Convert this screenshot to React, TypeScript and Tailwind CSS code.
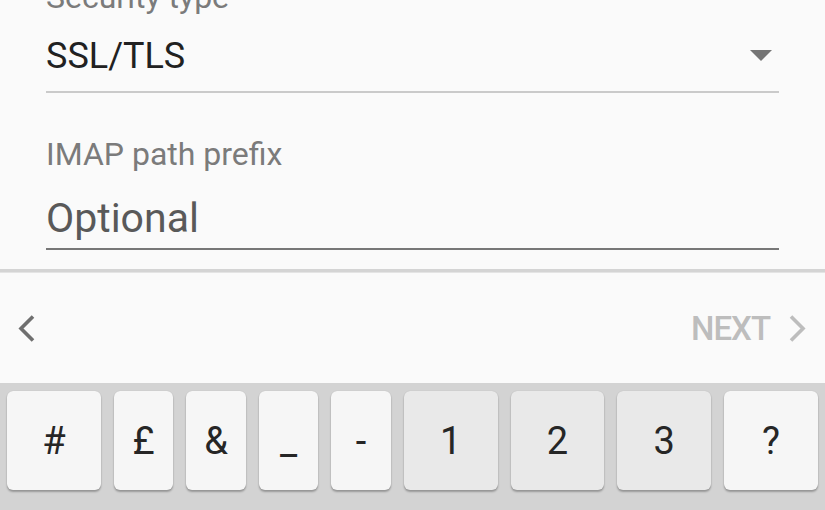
import React from "react";

const Key = ({ label, wide, dark, className = "" }: { label: string; wide?: boolean; dark?: boolean; className?: string }) => (
  <div
    className={`${wide ? "flex-[93]" : "flex-[59]"} basis-0 h-[99px] rounded-[6px] flex items-center justify-center text-[38px] leading-none text-[#262626] shadow-[0_2px_2px_rgba(0,0,0,0.28),0_0_1px_rgba(0,0,0,0.18)] ${dark ? "bg-[#e9e9e9]" : "bg-[#f6f6f6]"} ${className}`}
  >
    <span className="relative">{label}</span>
  </div>
);

export default function App() {
  return (
    <div className="w-[825px] h-[510px] overflow-hidden bg-[#fafafa] flex flex-col" style={{ fontFamily: "Roboto, 'Noto Sans', sans-serif" }}>
      {/* form */}
      <div className="h-[269px] px-[46px] flex flex-col">
        <div className="mt-[-22px] h-[38px] leading-[38px] text-[32px] text-[#7b7b7b]">Security type</div>
        <div className="mt-[18px] h-[44px] flex items-center justify-between pr-[7px]">
          <span className="text-[36px] leading-[44px] text-[#212121]">SSL/TLS</span>
          <svg width="22" height="11" viewBox="0 0 22 11" className="mt-[-2px]">
            <polygon points="0,0 22,0 11,11" fill="#757575" />
          </svg>
        </div>
        <div className="mt-[13px] h-[2px] bg-[#cacaca]" />
        <div className="mt-[42px] h-[38px] leading-[38px] text-[32px] text-[#7b7b7b]">IMAP path prefix</div>
        <div className="mt-[21px] h-[48px] leading-[48px] text-[41px] text-[#595959]">Optional</div>
        <div className="mt-[6px] h-[2px] bg-[#777777]" />
      </div>
      {/* separator */}
      <div className="h-[4px] bg-[#d4d4d4] border-b border-[#e4e4e4]" />
      {/* nav bar */}
      <div className="h-[110px] flex items-center justify-between pl-[18px] pr-[19px]">
        <svg width="17" height="27" viewBox="0 0 17 27">
          <polyline points="15,1.5 3,13.5 15,25.5" fill="none" stroke="#6f6f6f" strokeWidth="3.6" />
        </svg>
        <div className="flex items-center gap-[19px]">
          <span className="text-[33px] font-medium tracking-[-1px] text-[#bdbdbd] leading-none">NEXT</span>
          <svg width="17" height="27" viewBox="0 0 17 27">
            <polyline points="2,1.5 14,13.5 2,25.5" fill="none" stroke="#bdbdbd" strokeWidth="3.6" />
          </svg>
        </div>
      </div>
      {/* keyboard */}
      <div className="flex-1 bg-[#d3d3d3] pt-[8px] px-[7px] flex gap-[13px] items-start">
        <Key label="#" wide />
        <Key label="£" />
        <Key label="&" />
        <Key label="_" />
        <Key label="-" />
        <Key label="1" wide dark />
        <Key label="2" wide dark />
        <Key label="3" wide dark />
        <Key label="?" wide />
      </div>
    </div>
  );
}
